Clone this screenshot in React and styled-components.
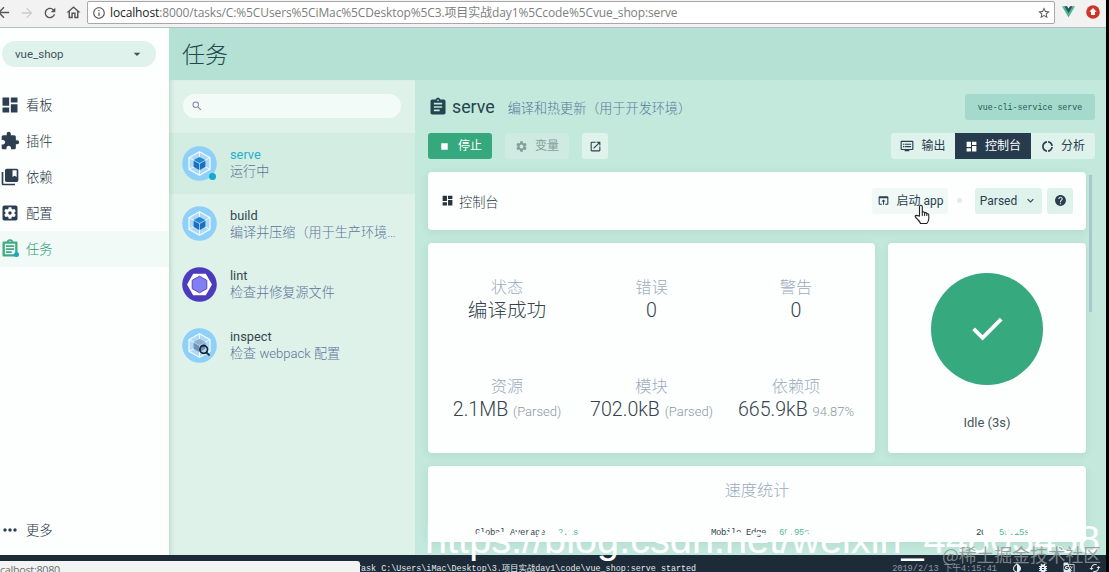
import React from 'react'
import styled, { createGlobalStyle, css } from 'styled-components'
import {
  MdArrowBack, MdArrowForward, MdRefresh, MdOutlineHome, MdInfoOutline, MdStarBorder,
  MdArrowDropDown, MdDashboard, MdExtension, MdCollectionsBookmark, MdSettingsApplications,
  MdAssignment, MdMoreHoriz, MdSearch, MdStop, MdSettings, MdOpenInNew,
  MdDvr, MdDonutLarge, MdOpenInBrowser, MdKeyboardArrowDown, MdHelp,
  MdInvertColors, MdBugReport, MdGTranslate, MdCached,
} from 'react-icons/md'

const GlobalStyle = createGlobalStyle`
  * { box-sizing: border-box; }
  body {
    margin: 0;
    overflow: hidden;
    background: #000;
    color: #2c3e50;
    font-family: Roboto, "Noto Sans CJK SC", sans-serif;
    font-size: 13px;
  }
  svg { display: block; flex: none; }
`

const Screen = styled.div`
  position: relative;
  display: flex;
  flex-direction: column;
  width: 1106px;
  height: 572px;
  overflow: hidden;
`

/* browser */
const BrowserBar = styled.header`
  display: flex;
  align-items: center;
  height: 28px;
  flex: none;
  padding-bottom: 3px;
  background: #f1f2f1;
  border-bottom: 1px solid #b3bfb9;
  color: #555;
`
const NavIcons = styled.div`
  display: flex;
  align-items: center;
  gap: 7px;
  width: 87px;
  padding-top: 1px;
  svg:first-child { margin-left: -5px; }
  svg:nth-child(2) { color: #ccc; }
`
const Address = styled.div`
  display: flex;
  align-items: center;
  width: 968px;
  height: 23px;
  margin-top: 1px;
  padding: 0 3px 0 4px;
  background: #fefffe;
  border: 1px solid #a8a8a8;
  border-radius: 2px;
`
const Url = styled.span`
  flex: 1;
  margin-left: 4px;
  color: #7c7f7d;
  font-family: "Open Sans", "Noto Sans CJK SC", sans-serif;
  font-size: 12px;
  line-height: 20px;
  letter-spacing: -.12px;
  white-space: nowrap;
  b { color: #222; font-weight: 400; }
`
const Extensions = styled.div`
  display: flex;
  align-items: center;
  gap: 11px;
  margin-left: 7px;
`

/* app shell */
const Workspace = styled.div`
  display: flex;
  height: 527px;
  flex: none;
`
const Sidebar = styled.nav`
  display: flex;
  flex-direction: column;
  width: 169px;
  background: #fdfffe;
`
const ProjectSelect = styled.div`
  display: flex;
  align-items: center;
  justify-content: space-between;
  width: 154px;
  height: 26px;
  margin: 13px 0 20px 2px;
  padding: 0 11px 0 13px;
  border-radius: 13px;
  background: #dff2eb;
  color: #45545c;
  font-size: 11.5px;
`
const NavItem = styled.div`
  display: flex;
  align-items: center;
  gap: 6px;
  height: 36px;
  background: ${props => props.$active ? '#f1faf7' : 'transparent'};
  margin-top: ${props => props.$last ? 'auto' : 0};
  margin-bottom: ${props => props.$last ? '7px' : 0};
  span {
    padding-bottom: 2px;
    color: ${props => props.$active ? '#2b9a72' : '#24343e'};
    font-size: 13.3px;
    font-weight: 300;
  }
  svg { color: ${props => props.$active ? '#42a983' : '#2c3e50'}; }
`
const NavIcon = styled.div`
  position: relative;
  width: 20px;
`
const RunDot = styled.i`
  position: absolute;
  right: ${props => props.$right};
  bottom: ${props => props.$bottom};
  width: ${props => props.$size};
  height: ${props => props.$size};
  border-radius: 50%;
  background: #12aad0;
`
const Main = styled.main`
  display: flex;
  flex-direction: column;
  flex: 1;
`
const PageHeader = styled.div`
  height: 52px;
  padding: 1px 0 0 13px;
  background: #b5e1d4;
  color: #24484e;
  font-size: 23px;
  font-weight: 300;
  line-height: 53px;
`
const Columns = styled.div`
  display: flex;
  flex: 1;
  min-height: 0;
`

/* task list */
const TaskList = styled.section`
  width: 246px;
  padding-top: 14px;
  background: #def2ea;
  box-shadow: inset 4px 0 5px -3px rgba(60, 110, 90, .25);
`
const Search = styled.div`
  display: flex;
  align-items: center;
  height: 24px;
  margin: 0 14px 15px;
  padding-left: 8px;
  border-radius: 12px;
  background: #f3fbf8;
  color: #7b86a0;
`
const TaskRow = styled.div`
  display: flex;
  align-items: center;
  gap: 13px;
  height: 60.6px;
  padding: 0 13px;
  background: ${props => props.$active ? 'rgba(66, 185, 131, .07)' : 'transparent'};
`
const TaskIcon = styled.div`
  position: relative;
  width: 35px;
  height: 35px;
`
const TaskText = styled.div`
  min-width: 0;
  flex: 1;
  line-height: 17px;
`
const TaskName = styled.div`
  color: ${props => props.$active ? '#25afd0' : '#34474f'};
  font-size: 12.8px;
`
const TaskNote = styled.div`
  width: 168px;
  overflow: hidden;
  color: #5f739b;
  font-size: 13.1px;
  font-weight: 300;
  white-space: nowrap;
  text-overflow: ellipsis;
`

/* task details */
const Details = styled.section`
  display: flex;
  flex-direction: column;
  gap: 13px;
  flex: 1;
  padding: 14px 11px 0 13px;
  background: #c3e8dc;
`
const Bar = styled.div`
  display: flex;
  align-items: center;
  height: 26px;
  flex: none;
`
const TaskTitle = styled.h1`
  margin: 0 13px 2px 4px;
  color: #25444c;
  font-size: 17.8px;
  font-weight: 400;
`
const Description = styled.span`
  flex: 1;
  color: #547a9d;
  font-size: 13.1px;
  font-weight: 300;
`
const Command = styled.code`
  width: 130px;
  height: 26px;
  border-radius: 3px;
  background: #a4dacb;
  color: #27595a;
  font-family: "Liberation Mono", monospace;
  font-size: 8.3px;
  line-height: 27px;
  text-align: center;
`
const Button = styled.button`
  display: flex;
  align-items: center;
  justify-content: center;
  gap: 7px;
  width: ${props => props.$width};
  height: 26px;
  margin: 0 ${props => props.$after || 0} 0 0;
  padding: 0;
  border: 0;
  border-radius: ${props => props.$radius || '3px'};
  background: #dff2eb;
  color: #2c3e50;
  font: 400 12px Roboto, "Noto Sans CJK SC", sans-serif;
  ${props => props.$primary && css`
    background: #35a97d;
    color: #fff;
  `}
  ${props => props.$disabled && css`
    background: #cfeae1;
    color: #849d98;
  `}
  ${props => props.$selected && css`
    background: #263b4e;
    color: #fff;
  `}
  ${props => props.$hover && css`
    background: #f0f9f6;
  `}
`
const Label = styled.span`
  padding-bottom: 3px;
`
const Tabs = styled.div`
  display: flex;
  margin-left: auto;
`
const Scroller = styled.div`
  display: flex;
  gap: 3px;
  width: 664px;
`
const Dashboard = styled.div`
  display: flex;
  flex-direction: column;
  gap: 13px;
  width: 658px;
`
const Thumb = styled.div`
  width: 3px;
  height: 137px;
  margin-top: 3px;
  background: #a3c9cb;
`
const Card = styled.div`
  border-radius: 4px;
  background: #fdfffe;
  box-shadow: 0 2px 8px rgba(40, 110, 85, .1);
`
const DashboardHeader = styled(Card)`
  display: flex;
  align-items: center;
  height: 57.5px;
  padding: 0 13px;
`
const DashboardTitle = styled.div`
  display: flex;
  align-items: center;
  gap: 5px;
  flex: 1;
  color: #24343e;
  font-size: 13.2px;
  font-weight: 300;
  span { padding-top: 1px; }
`
const Separator = styled.i`
  width: 5px;
  height: 5px;
  margin: 0 13px 0 9px;
  border-radius: 50%;
  background: #e3ebe8;
`
const CardRow = styled.div`
  display: flex;
  gap: 13px;
  height: 210px;
`
const Stats = styled(Card)`
  display: grid;
  grid-template-columns: repeat(3, 144.5px);
  grid-auto-rows: 99px;
  width: 447px;
  padding: 33px 6.75px 0;
`
const Stat = styled.div`
  text-align: center;
  white-space: nowrap;
`
const StatLabel = styled.div`
  color: #9cabc0;
  font-size: 16.2px;
  font-weight: 300;
  line-height: 23px;
`
const StatValue = styled.div`
  color: #35434d;
  font-size: 19.6px;
  font-weight: 300;
  line-height: 23px;
  small { color: #8c99a2; font-size: 13px; }
`
const Status = styled(Card)`
  display: flex;
  flex-direction: column;
  align-items: center;
  flex: 1;
  padding-top: 30px;
  color: #47555b;
`
const StatusCircle = styled.div`
  display: flex;
  align-items: center;
  justify-content: center;
  width: 112px;
  height: 112px;
  margin-bottom: 30px;
  border-radius: 50%;
  background: #36a97e;
`
const SpeedCard = styled(Card)`
  height: 76px;
  padding-top: 13px;
`
const SpeedRow = styled.div`
  display: grid;
  grid-template-columns: 236px 265px 1fr;
  padding-left: 47px;
  margin-top: 24px;
  color: #35434d;
  font: 9px/15px "Liberation Mono", monospace;
  letter-spacing: -.4px;
  span { color: #52b594; margin-left: 13px; }
`

/* status bar */
const Footer = styled.footer`
  display: flex;
  align-items: center;
  height: 17px;
  padding: 7px 5px 0 356px;
  background: #1d2b38;
  color: #e5ecef;
  font-family: "Liberation Mono", "Noto Sans CJK SC", monospace;
  font-size: 8.4px;
  white-space: nowrap;
`
const Log = styled.span`
  flex: 1;
`
const Clock = styled.time`
  color: #8d9aa4;
  font-size: 8.6px;
  margin-right: 14px;
`
const FooterIcons = styled.div`
  display: flex;
  gap: 14px;
  padding-top: 1px;
`
const LinkPreview = styled.div`
  position: absolute;
  left: 0;
  bottom: 0;
  width: 360px;
  height: 11px;
  overflow: hidden;
  border-top-right-radius: 3px;
  background: #f2f4f3;
  color: #6b6e6d;
  font: 10.8px/18px "Open Sans", sans-serif;
  letter-spacing: -.3px;
`
const Watermark = styled.div`
  position: absolute;
  white-space: nowrap;
  pointer-events: none;
`
const BlogMark = styled(Watermark)`
  left: 425px;
  top: 516px;
  color: #fff;
  font: 39.7px/46px "Liberation Sans", sans-serif;
`
const CommunityMark = styled(Watermark)`
  left: 942px;
  top: 542px;
  color: rgba(140, 148, 150, .85);
  font: 400 17.8px/24px "Noto Sans CJK SC", sans-serif;
`
const Pointer = styled.svg`
  position: absolute;
  left: 914px;
  top: 204px;
`

const WebpackIcon = ({ inspect }) => (
  <svg width="35" height="35" viewBox="0 0 35 35">
    <circle cx="17.5" cy="17.5" r="17.3" fill="#8ed0f8" />
    <path d="M17.5 5.7 28 11.6v11.8l-10.5 5.9L7 23.4V11.6z" fill="#acd9f7" stroke="#eefaff" strokeWidth="1.3" />
    <path d="M17.5 6v5.4M7.4 11.8l4.7 2.6M27.6 11.8l-4.7 2.6M7.4 23.2l4.7-2.6M27.6 23.2l-4.7-2.6M17.5 23.7V29" stroke="#eefaff" />
    <path d="m17.5 11 5.8 3-5.8 3.1-5.8-3.1z" fill={inspect ? '#91adca' : '#2388cf'} />
    <path d="m11.6 14.7 5.5 3v6.2l-5.5-3.1zm11.8 0-5.5 3v6.2l5.5-3.1z" fill={inspect ? '#6e91b8' : '#1c70bd'} />
    {inspect && <path d="M25.6 26.5 21.8 22.7M23.5 20.5a3.8 3.8 0 1 1-7.6 0 3.8 3.8 0 0 1 7.6 0z" transform="translate(2 1)" fill="none" stroke="#172027" strokeWidth="1.7" />}
  </svg>
)

const EslintIcon = () => (
  <svg width="35" height="35" viewBox="0 0 35 35">
    <circle cx="17.5" cy="17.5" r="17.3" fill="#4b3bbd" />
    <path d="M11.2 6.7h12.6L30 17.5l-6.2 10.8H11.2L5 17.5z" fill="#fff" />
    <path d="m17.5 9.2 7.3 4.1v8.4l-7.3 4.1-7.3-4.1v-8.4z" fill="#8080f2" stroke="#5946bd" strokeWidth="1" />
  </svg>
)

const VueLogo = () => (
  <svg width="13" height="12" viewBox="0 0 26 23">
    <path d="M0 0h10l3 5 3-5h10L13 22.5z" fill="#50b695" />
    <path d="M5 0h5l3 5 3-5h5l-8 14z" fill="#31505a" />
  </svg>
)

const UpdateLogo = () => (
  <svg width="14" height="14" viewBox="0 0 14 14">
    <circle cx="7" cy="7" r="6.8" fill="#cf3527" />
    <path d="m7 3 3.7 3.7H9V10H5V6.7H3.3z" fill="#fff" />
  </svg>
)

const TasksIcon = ({ size }) => (
  <svg width={size} height={size} viewBox="0 0 24 24" fill="none" stroke="currentColor" strokeWidth="2.8">
    <path d="M4.4 4.4h15.2v15.2H4.4z" strokeLinejoin="round" />
    <path d="M7 8.6h10M7 12.2h10M7 15.8h7" strokeWidth="2" />
    <path d="M9 4.2a3 3 0 0 1 6 0" strokeWidth="2" />
  </svg>
)

const CheckIcon = () => (
  <svg width="40" height="40" viewBox="0 0 40 40" fill="none" stroke="#fff" strokeWidth="3.8">
    <path d="m6.6 19.8 9 9L34.2 10.2" />
  </svg>
)

const navItems = [
  { label: '看板', icon: MdDashboard },
  { label: '插件', icon: MdExtension },
  { label: '依赖', icon: MdCollectionsBookmark },
  { label: '配置', icon: MdSettingsApplications },
  { label: '任务', icon: TasksIcon, active: true },
]

const tasks = [
  { name: 'serve', note: '运行中', icon: <WebpackIcon />, active: true },
  { name: 'build', note: '编译并压缩（用于生产环境）', icon: <WebpackIcon /> },
  { name: 'lint', note: '检查并修复源文件', icon: <EslintIcon /> },
  { name: 'inspect', note: '检查 webpack 配置', icon: <WebpackIcon inspect /> },
]

const stats = [
  { label: '状态', value: '编译成功' },
  { label: '错误', value: '0' },
  { label: '警告', value: '0' },
  { label: '资源', value: '2.1MB', extra: '(Parsed)' },
  { label: '模块', value: '702.0kB', extra: '(Parsed)' },
  { label: '依赖项', value: '665.9kB', extra: '94.87%' },
]

function Browser() {
  return (
    <BrowserBar>
      <NavIcons>
        <MdArrowBack size={17} />
        <MdArrowForward size={16} />
        <MdRefresh size={16} />
        <MdOutlineHome size={17} />
      </NavIcons>
      <Address>
        <MdInfoOutline size={14} />
        <Url><b>localhost</b>:8000/tasks/C:%5CUsers%5CiMac%5CDesktop%5C3.项目实战day1%5Ccode%5Cvue_shop:serve</Url>
        <MdStarBorder size={14} />
      </Address>
      <Extensions>
        <VueLogo />
        <UpdateLogo />
      </Extensions>
    </BrowserBar>
  )
}

function TaskDetails() {
  return (
    <Details>
      <Bar>
        <MdAssignment size={20} color="#234451" />
        <TaskTitle>serve</TaskTitle>
        <Description>编译和热更新（用于开发环境）</Description>
        <Command>vue-cli-service serve</Command>
      </Bar>
      <Bar>
        <Button $primary $width="64px" $after="13px"><MdStop size={13} /><Label>停止</Label></Button>
        <Button $disabled $width="64px" $after="13px"><MdSettings size={13} /><Label>变量</Label></Button>
        <Button $width="26px"><MdOpenInNew size={13} /></Button>
        <Tabs>
          <Button $width="64px" $radius="3px 0 0 3px"><MdDvr size={14} /><Label>输出</Label></Button>
          <Button $selected $width="76px" $radius="0"><MdDashboard size={13} /><Label>控制台</Label></Button>
          <Button $width="64px" $radius="0 3px 3px 0"><MdDonutLarge size={13} /><Label>分析</Label></Button>
        </Tabs>
      </Bar>
      <Scroller>
        <Dashboard>
          <DashboardHeader>
            <DashboardTitle>
              <MdDashboard size={13} />
              <span>控制台</span>
            </DashboardTitle>
            <Button $hover $width="76px"><MdOpenInBrowser size={13} /><Label>启动 app</Label></Button>
            <Separator />
            <Button $width="67px" $after="5px">Parsed<MdKeyboardArrowDown size={13} /></Button>
            <Button $width="26px"><MdHelp size={13} /></Button>
          </DashboardHeader>
          <CardRow>
            <Stats>
              {stats.map(stat => (
                <Stat key={stat.label}>
                  <StatLabel>{stat.label}</StatLabel>
                  <StatValue>{stat.value} {stat.extra && <small>{stat.extra}</small>}</StatValue>
                </Stat>
              ))}
            </Stats>
            <Status>
              <StatusCircle><CheckIcon /></StatusCircle>
              Idle (3s)
            </Status>
          </CardRow>
          <SpeedCard>
            <Stat><StatLabel>速度统计</StatLabel></Stat>
            <SpeedRow>
              <div>Global Average<span>2.1s</span></div>
              <div>Mobile Edge<span>69.95s</span></div>
              <div>2G<span>59.15s</span></div>
            </SpeedRow>
          </SpeedCard>
        </Dashboard>
        <Thumb />
      </Scroller>
    </Details>
  )
}

export default function App() {
  return (
    <>
      <GlobalStyle />
      <Screen>
        <Browser />
        <Workspace>
          <Sidebar>
            <ProjectSelect>vue_shop<MdArrowDropDown size={16} /></ProjectSelect>
            {navItems.map(({ label, icon: Icon, active }) => (
              <NavItem key={label} $active={active}>
                <NavIcon>
                  <Icon size={20} />
                  {active && <RunDot $size="5px" $right="1px" $bottom="2px" />}
                </NavIcon>
                <span>{label}</span>
              </NavItem>
            ))}
            <NavItem $last>
              <NavIcon><MdMoreHoriz size={20} /></NavIcon>
              <span>更多</span>
            </NavItem>
          </Sidebar>
          <Main>
            <PageHeader>任务</PageHeader>
            <Columns>
              <TaskList>
                <Search><MdSearch size={12} /></Search>
                {tasks.map(task => (
                  <TaskRow key={task.name} $active={task.active}>
                    <TaskIcon>
                      {task.icon}
                      {task.active && <RunDot $size="7px" $right="1px" $bottom="1px" />}
                    </TaskIcon>
                    <TaskText>
                      <TaskName $active={task.active}>{task.name}</TaskName>
                      <TaskNote>{task.note}</TaskNote>
                    </TaskText>
                  </TaskRow>
                ))}
              </TaskList>
              <TaskDetails />
            </Columns>
          </Main>
        </Workspace>
        <Footer>
          <Log>Task C:\Users\iMac\Desktop\3.项目实战day1\code\vue_shop:serve started</Log>
          <Clock>2019/2/13 下午4:15:41</Clock>
          <FooterIcons>
            <MdInvertColors size={12} />
            <MdBugReport size={12} />
            <MdGTranslate size={12} />
            <MdCached size={12} />
          </FooterIcons>
        </Footer>
        <LinkPreview>calhost:8080</LinkPreview>
        <BlogMark>https://blog.csdn.net/weixin_44803458</BlogMark>
        <CommunityMark>@稀土掘金技术社区</CommunityMark>
        <Pointer width="17" height="21" viewBox="0 0 17 21">
          <path d="M5.5 12V3q0-1.7 1.4-1.7T8.3 3v5q2-.6 2.3.8 1.8-.5 2.2.8 2-.2 2 1.7v3.2q0 2.8-2 5H6.5q-.5-2-4.8-6-1.5-2 1-2.1z" fill="#fff" stroke="#222" strokeWidth="1.1" />
          <path d="M8.3 8v4M10.6 9v3M12.8 10v2" stroke="#222" strokeWidth="1" />
        </Pointer>
      </Screen>
    </>
  )
}
